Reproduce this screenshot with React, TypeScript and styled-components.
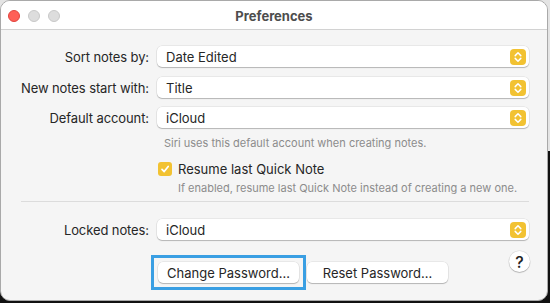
import React from "react";
import styled, { createGlobalStyle } from "styled-components";

const Global = createGlobalStyle`
  html, body { margin: 0; padding: 0; }
  html { background: linear-gradient(to bottom, #e4e4e4 0, #e4e4e4 50%, #111 50%, #111 100%); }
  body { width: 550px; height: 303px; overflow: hidden; font-family: Inter, "Liberation Sans", Arial, sans-serif; -webkit-font-smoothing: antialiased; }
`;

const Window = styled.div`
  box-sizing: border-box;
  width: 548px;
  height: 301px;
  border: 1px solid #a9a9a9;
  border-radius: 10px;
  background: #f5f5f5;
  overflow: hidden;
  display: flex;
  flex-direction: column;
`;

const TitleBar = styled.div`
  height: 28px;
  flex: 0 0 28px;
  background: #ffffff;
  border-bottom: 1px solid #d2d2d2;
  display: grid;
  grid-template-columns: 80px 1fr 80px;
  align-items: center;
`;

const Lights = styled.div`
  display: flex;
  gap: 8px;
  padding-left: 7px;
  padding-top: 1px;
`;

const Light = styled.span<{ $color: string; $border: string }>`
  width: 12px;
  height: 12px;
  border-radius: 50%;
  box-sizing: border-box;
  background: ${(p) => p.$color};
  border: 0.5px solid ${(p) => p.$border};
`;

const Title = styled.div`
  text-align: center;
  font-size: 13px;
  font-weight: 700;
  color: #4d4d4d;
  padding-top: 1px;
`;

const Body = styled.div`
  display: flex;
  flex-direction: column;
  padding: 16px 18px 0 0;
`;

const Row = styled.div<{ $mt: number }>`
  display: grid;
  grid-template-columns: 148px 1fr;
  column-gap: 8px;
  align-items: center;
  height: 21px;
  margin-top: ${(p) => p.$mt}px;
`;

const Label = styled.div`
  text-align: right;
  font-size: 13px;
  letter-spacing: -0.1px;
  color: #262626;
`;

const Popup = styled.div`
  height: 21px;
  box-sizing: border-box;
  background: #fff;
  border-radius: 5px;
  box-shadow: 0 0 0 0.5px rgba(0, 0, 0, 0.1), 0 1px 1px rgba(0, 0, 0, 0.22);
  display: flex;
  align-items: center;
  justify-content: space-between;
  padding: 0 3px 0 9px;
  font-size: 13px;
  color: #262626;
`;

const Stepper = styled.span`
  width: 16px;
  height: 16px;
  border-radius: 4px;
  background: #f2c232;
  display: flex;
  align-items: center;
  justify-content: center;
`;

const Hint = styled.div<{ $mt: number; $indent: number }>`
  margin-top: ${(p) => p.$mt}px;
  padding-left: ${(p) => p.$indent}px;
  font-size: 11px;
  line-height: 14px;
  color: #8c8c8c;
`;

const CheckRow = styled.label<{ $mt: number }>`
  margin-top: ${(p) => p.$mt}px;
  padding-left: 157px;
  display: flex;
  align-items: center;
  gap: 6px;
  font-size: 13px;
  line-height: 16px;
  color: #262626;
`;

const Check = styled.span`
  width: 14px;
  height: 14px;
  border-radius: 3px;
  background: #f2c232;
  display: flex;
  align-items: center;
  justify-content: center;
`;

const Divider = styled.div<{ $mt: number }>`
  margin: ${(p) => p.$mt}px 0 0 20px;
  height: 1px;
  background: #dcdcdc;
`;

const ButtonRow = styled.div<{ $mt: number }>`
  margin-top: ${(p) => p.$mt}px;
  padding-left: 157px;
  display: flex;
  align-items: flex-start;
`;

const Button = styled.button<{ $focus?: boolean; $ml?: number }>`
  position: relative;
  margin-top: 11px;
  margin-left: ${(p) => p.$ml ?? 0}px;
  width: 141px;
  height: 21px;
  border: none;
  border-radius: 5px;
  background: #fff;
  box-shadow: 0 0 0 0.5px rgba(0, 0, 0, 0.1), 0 1px 1px rgba(0, 0, 0, 0.22);
  font-family: inherit;
  font-size: 13px;
  color: #262626;
  padding: 0;
  outline: none;
  &::after {
    content: "";
    display: ${(p) => (p.$focus ? "block" : "none")};
    position: absolute;
    left: -7px;
    right: -7px;
    top: -7px;
    bottom: -7px;
    border: 3px solid #3a9fe3;
  }
`;

const Help = styled.div`
  margin-left: auto;
  margin-right: -1px;
  width: 21px;
  height: 21px;
  border-radius: 50%;
  background: #fff;
  box-shadow: 0 0 0 0.5px rgba(0, 0, 0, 0.12), 0 1px 1px rgba(0, 0, 0, 0.2);
  display: flex;
  align-items: center;
  justify-content: center;
  font-size: 16px;
  font-weight: 500;
  color: #222;
`;

const StepperIcon = () => (
  <Stepper>
    <svg width="8" height="12" viewBox="0 0 8 12">
      <path d="M1.2 4.6 L4 1.8 L6.8 4.6 M1.2 7.4 L4 10.2 L6.8 7.4" fill="none" stroke="#fff" strokeWidth="1.5" strokeLinecap="round" strokeLinejoin="round" />
    </svg>
  </Stepper>
);

const Select = ({ value }: { value: string }) => (
  <Popup>
    <span>{value}</span>
    <StepperIcon />
  </Popup>
);

export default function App() {
  return (
    <>
      <Global />
      <Window>
        <TitleBar>
          <Lights>
            <Light $color="#fe5f57" $border="#e0443e" />
            <Light $color="#dddddd" $border="#c8c8c8" />
            <Light $color="#dddddd" $border="#c8c8c8" />
          </Lights>
          <Title>Preferences</Title>
          <div />
        </TitleBar>
        <Body>
          <Row $mt={0}>
            <Label>Sort notes by:</Label>
            <Select value="Date Edited" />
          </Row>
          <Row $mt={10}>
            <Label>New notes start with:</Label>
            <Select value="Title" />
          </Row>
          <Row $mt={9}>
            <Label>Default account:</Label>
            <Select value="iCloud" />
          </Row>
          <Hint $mt={8} $indent={163}>Siri uses this default account when creating notes.</Hint>
          <CheckRow $mt={11}>
            <Check>
              <svg width="10" height="10" viewBox="0 0 10 10">
                <path d="M2 5.3 L4.2 7.6 L8.2 2.4" fill="none" stroke="#fff" strokeWidth="1.7" strokeLinecap="round" strokeLinejoin="round" />
              </svg>
            </Check>
            Resume last Quick Note
          </CheckRow>
          <Hint $mt={4} $indent={177}>If enabled, resume last Quick Note instead of creating a new one.</Hint>
          <Divider $mt={6} />
          <Row $mt={17}>
            <Label>Locked notes:</Label>
            <Select value="iCloud" />
          </Row>
          <ButtonRow $mt={11}>
            <Button $focus>Change Password…</Button>
            <Button $ml={8}>Reset Password…</Button>
            <Help>?</Help>
          </ButtonRow>
        </Body>
      </Window>
    </>
  );
}
